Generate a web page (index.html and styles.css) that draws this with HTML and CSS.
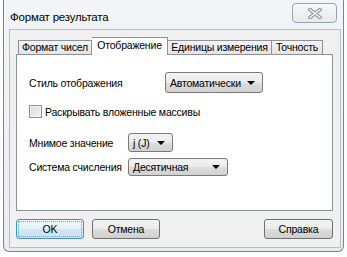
FILE: index.html
```html
<!DOCTYPE html>
<html lang="ru">
<head>
<meta charset="utf-8">
<title>Формат результата</title>
<link rel="stylesheet" href="styles.css">
</head>
<body>
<div class="frame">
  <div class="titlebar">
    <span class="title">Формат результата</span>
    <div class="close">
      <svg width="14" height="11" viewBox="0 0 14 11">
        <path d="M2 1.5 L12 9.5 M12 1.5 L2 9.5" stroke="#8b919a" stroke-width="3.6" stroke-linecap="square" fill="none"/>
        <path d="M2 1.5 L12 9.5 M12 1.5 L2 9.5" stroke="#fafafa" stroke-width="1.6" stroke-linecap="square" fill="none"/>
      </svg>
    </div>
  </div>
  <div class="client">
    <div class="tabs">
      <div class="tab t1">Формат чисел</div>
      <div class="tab selected t2">Отображение</div>
      <div class="tab t3">Единицы измерения</div>
      <div class="tab t4">Точность</div>
    </div>
    <div class="panel">
      <div class="row r1">
        <span class="label wide">Стиль отображения</span>
        <div class="combo c-auto"><span>Автоматически</span><i class="arrow"></i></div>
      </div>
      <div class="row r2">
        <span class="checkbox"></span>
        <span class="cblabel">Раскрывать вложенные массивы</span>
      </div>
      <div class="row r3">
        <span class="label">Мнимое значение</span>
        <div class="combo c-j"><span>j (J)</span><i class="arrow"></i></div>
      </div>
      <div class="row r4">
        <span class="label">Система счисления</span>
        <div class="combo c-dec"><span>Десятичная</span><i class="arrow"></i></div>
      </div>
    </div>
    <div class="buttons">
      <div class="btn default"><span class="focus">OK</span></div>
      <div class="btn">Отмена</div>
      <div class="spacer"></div>
      <div class="btn">Справка</div>
    </div>
  </div>
</div>
</body>
</html>
```

FILE: styles.css
```css
* { box-sizing: border-box; }
html, body { margin: 0; padding: 0; }
body {
  width: 347px;
  height: 257px;
  background: #ffffff;
  font-family: "Liberation Sans", Arial, sans-serif;
  font-size: 10.5px;
  letter-spacing: -0.2px;
  color: #000;
  overflow: hidden;
}
.frame {
  margin-left: 3px;
  width: 341px;
  height: 252px;
  border: 1px solid #7f858d;
  border-top: none;
  border-radius: 0 0 6px 6px;
  background: linear-gradient(#f3f5f8, #e9edf2);
  padding: 0 2px 0 5px;
}
.titlebar {
  height: 29px;
  display: flex;
  align-items: flex-start;
  justify-content: space-between;
}
.title {
  margin-left: 1px;
  margin-top: 10px;
  font-size: 11.5px;
  line-height: 14px;
}
.close {
  margin-top: 3px;
  margin-right: 4px;
  width: 45px;
  height: 20px;
  border: 1px solid #9aa2ad;
  border-radius: 4px;
  background: linear-gradient(#f8f9fa, #e6e9ed);
  display: flex;
  align-items: center;
  justify-content: center;
}
.close svg { display: block; }
.client {
  height: 219px;
  border: 1px solid #b7bfc9;
  background: #f0f0f0;
  padding: 7px 7px 8px 6px;
}
.tabs {
  height: 18px;
  display: flex;
  align-items: flex-end;
  padding-left: 2px;
  margin-bottom: -1px;
  position: relative;
  z-index: 1;
}
.tab {
  height: 14px;
  margin-bottom: 1px;
  border: 1px solid #8d9199;
  border-bottom: none;
  border-left: none;
  background: linear-gradient(#f4f4f4, #e4e4e4);
  display: flex;
  align-items: center;
  justify-content: center;
  line-height: 13px;
  white-space: nowrap;
}
.t1 { width: 74px; border-left: 1px solid #8d9199; }
.tab.selected {
  height: 18px;
  margin-bottom: 0;
  background: #fff;
  padding-bottom: 3px;
}
.t2 { width: 76px; }
.t3 { width: 104px; }
.t4 { width: 51px; }
.panel {
  height: 157px;
  border: 1px solid #8d9199;
  background: #fff;
  padding: 17px 0 0 12px;
}
.row {
  display: flex;
  align-items: center;
}
.r1 { height: 21px; }
.r2 { height: 13px; margin-top: 12px; }
.r3 { height: 19px; margin-top: 15px; }
.r4 { height: 18px; margin-top: 6px; }
.label { width: 99px; white-space: nowrap; }
.label.wide { width: 136px; }
.combo {
  height: 100%;
  border: 1px solid #7a7a7a;
  border-radius: 3px;
  background: linear-gradient(#f3f3f3 0%, #ebebeb 50%, #dddddd 51%, #d1d1d1 100%);
  display: flex;
  align-items: center;
  justify-content: space-between;
  padding: 0 7px 0 4px;
  white-space: nowrap;
}
.c-auto { width: 98px; }
.c-j { width: 45px; }
.c-dec { width: 100px; }
.arrow {
  width: 0;
  height: 0;
  border-left: 4px solid transparent;
  border-right: 4px solid transparent;
  border-top: 4px solid #000;
}
.checkbox {
  width: 13px;
  height: 13px;
  border: 1px solid #8f8f8f;
  background: linear-gradient(135deg, #d9d9d9, #f4f4f4);
  box-shadow: inset 0 0 0 1px #f4f4f4;
}
.cblabel { margin-left: 3px; white-space: nowrap; }
.buttons {
  margin-top: 8px;
  height: 20px;
  display: flex;
}
.btn {
  width: 68px;
  height: 20px;
  border: 1px solid #707070;
  border-radius: 3px;
  background: linear-gradient(#f2f2f2 0%, #ebebeb 50%, #dddddd 51%, #cfcfcf 100%);
  display: flex;
  align-items: center;
  justify-content: center;
  margin-right: 8px;
}
.btn:last-child { margin-right: 0; width: 69px; }
.btn.default {
  border-color: #4c8fc0;
  background: linear-gradient(#f0f7fc 0%, #e3f0f9 50%, #d3e7f5 51%, #c6e0f2 100%);
  padding: 1px;
}
.focus {
  width: 100%;
  height: 100%;
  border: 1px dotted #5ab4dc;
  display: flex;
  align-items: center;
  justify-content: center;
}
.spacer { flex: 1; }
```
